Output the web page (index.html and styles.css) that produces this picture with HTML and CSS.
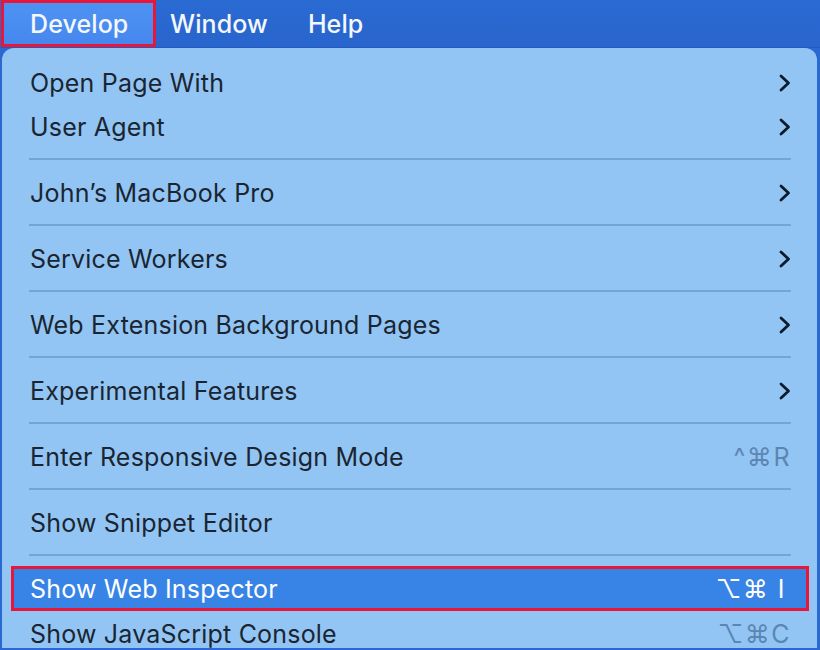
FILE: index.html
```html
<!DOCTYPE html>
<html lang="en">
<head>
<meta charset="utf-8">
<title>Develop menu</title>
<link rel="stylesheet" href="styles.css">
</head>
<body>
<div class="menubar">
  <div class="mb-item mb-active">Develop</div>
  <div class="mb-item">Window</div>
  <div class="mb-item">Help</div>
</div>
<div class="menu">
  <div class="row"><span class="label">Open Page With</span><svg class="chev" viewBox="0 0 12 18"><path d="M2 2 L9.5 9 L2 16"/></svg></div>
  <div class="row"><span class="label">User Agent</span><svg class="chev" viewBox="0 0 12 18"><path d="M2 2 L9.5 9 L2 16"/></svg></div>
  <div class="sep"></div>
  <div class="row"><span class="label">John’s MacBook Pro</span><svg class="chev" viewBox="0 0 12 18"><path d="M2 2 L9.5 9 L2 16"/></svg></div>
  <div class="sep"></div>
  <div class="row"><span class="label">Service Workers</span><svg class="chev" viewBox="0 0 12 18"><path d="M2 2 L9.5 9 L2 16"/></svg></div>
  <div class="sep"></div>
  <div class="row"><span class="label">Web Extension Background Pages</span><svg class="chev" viewBox="0 0 12 18"><path d="M2 2 L9.5 9 L2 16"/></svg></div>
  <div class="sep"></div>
  <div class="row"><span class="label">Experimental Features</span><svg class="chev" viewBox="0 0 12 18"><path d="M2 2 L9.5 9 L2 16"/></svg></div>
  <div class="sep"></div>
  <div class="row"><span class="label">Enter Responsive Design Mode</span><span class="key">^⌘R</span></div>
  <div class="sep"></div>
  <div class="row"><span class="label">Show Snippet Editor</span></div>
  <div class="sep"></div>
  <div class="row row-hl"><span class="label">Show Web Inspector</span><span class="key key-hl">⌥⌘ I</span></div>
  <div class="row"><span class="label">Show JavaScript Console</span><span class="key">⌥⌘C</span></div>
</div>
</body>
</html>
```
FILE: styles.css
```css
html, body {
  margin: 0;
  padding: 0;
}
body {
  width: 820px;
  height: 650px;
  overflow: hidden;
  background: #2a69d1;
  font-family: Inter, "Liberation Sans", "DejaVu Sans", sans-serif;
}
.menubar {
  height: 48px;
  display: flex;
  align-items: stretch;
  background: linear-gradient(#2a6ad3, #2865cc);
  box-shadow: inset 0 -1px 0 #2459bd;
}
.mb-item {
  display: flex;
  align-items: center;
  padding: 0 24px 0 16px;
  color: #f4f7fc;
  font-size: 25px;
  font-weight: 500;
  letter-spacing: 0.1px;
}
.mb-active {
  box-sizing: border-box;
  width: 155px;
  height: 47px;
  margin-left: 1px;
  padding-left: 26px;
  border: 3px solid #e8173a;
  background: linear-gradient(#4d93f3, #4687ee);
}
.mb-active + .mb-item {
  padding-left: 14px;
}
.menu {
  margin: 0 3px 0 2px;
  height: 600px;
  padding-top: 12px;
  box-sizing: border-box;
  background: #92c5f3;
  border-radius: 12px 12px 0 0;
}
.row {
  height: 44px;
  box-sizing: border-box;
  padding: 1px 26px 0 28px;
  display: flex;
  align-items: center;
  font-size: 25px;
  letter-spacing: 0.2px;
  color: #1b2532;
}
.label {
  flex: 1;
}
.chev {
  width: 12px;
  height: 18px;
  fill: none;
  stroke: #0c1a2d;
  stroke-width: 2.8;
  stroke-linecap: round;
  stroke-linejoin: round;
}
.key {
  color: #5c86b1;
  letter-spacing: 1.5px;
}
.sep {
  height: 2px;
  margin: 10px 26px 10px 27px;
  background: #72a6d8;
}
.row-hl {
  margin: 0 8px 0 9px;
  padding: 1px 20px 0 16px;
  border: 3px solid #e8173a;
  background: #3784e6;
  color: #ffffff;
  height: 45px;
}
.key-hl {
  color: #ffffff;
}
```
